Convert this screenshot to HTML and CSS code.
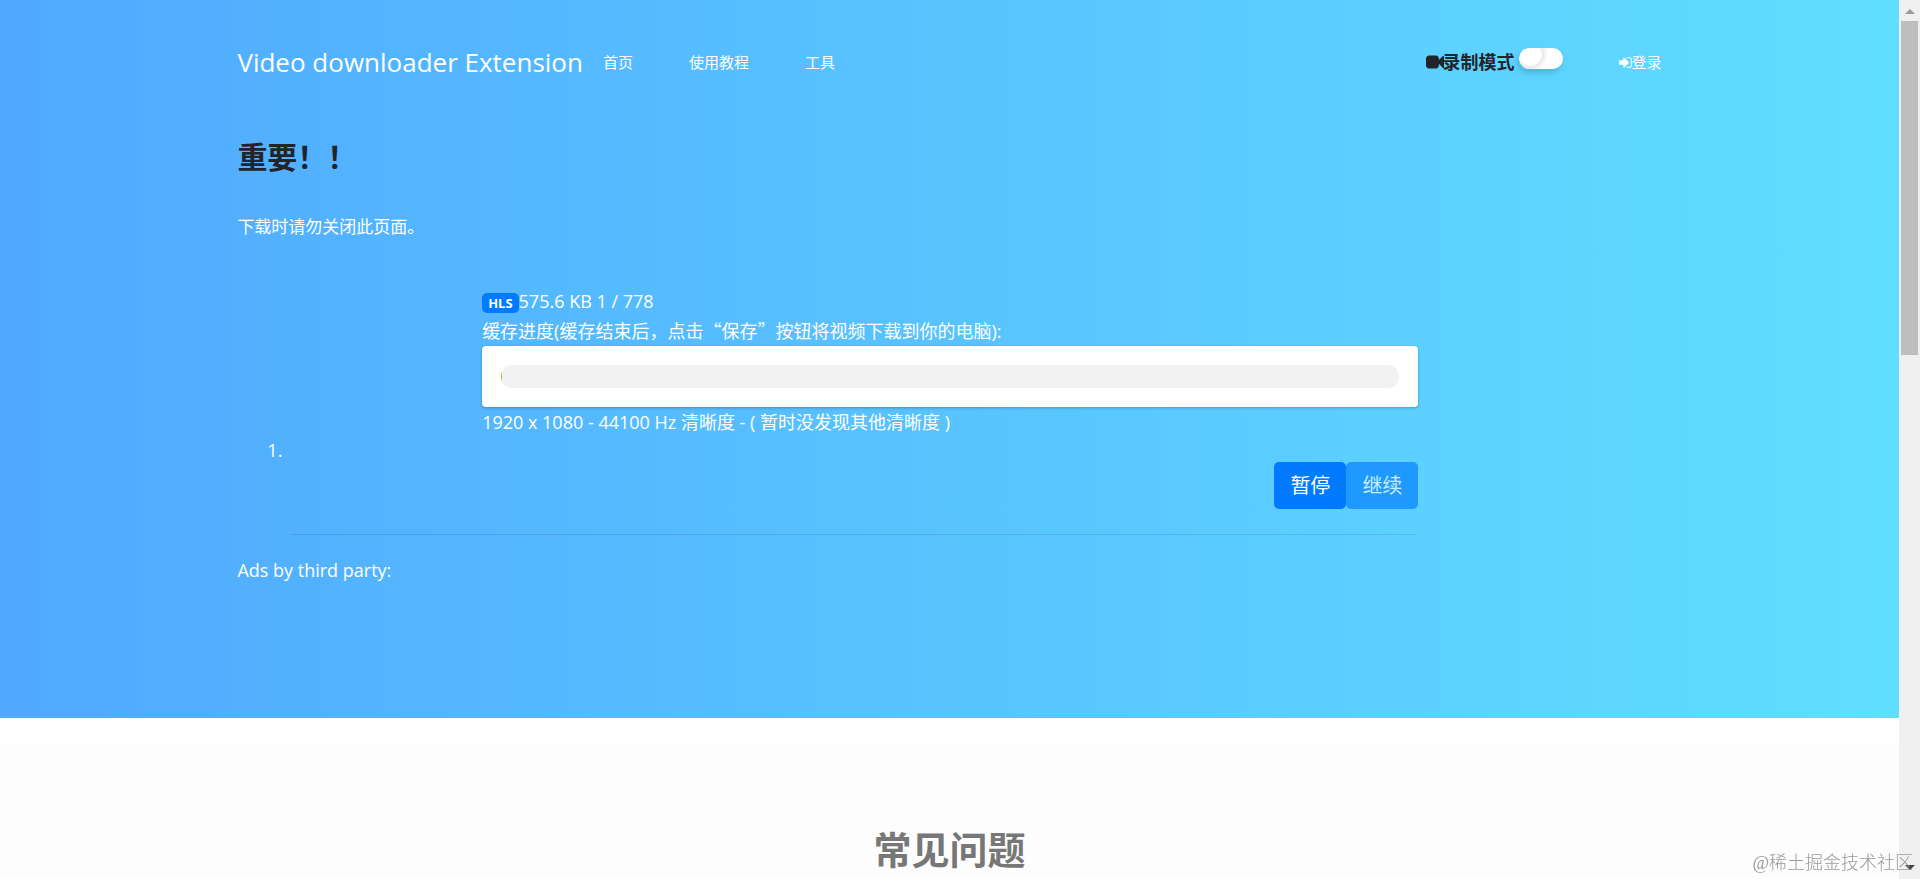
FILE: index.html
```html
<!DOCTYPE html>
<html lang="zh-CN">
<head>
  <meta charset="UTF-8">
  <meta name="viewport" content="width=device-width, initial-scale=1.0">
  <title>Video downloader Extension</title>
  <link rel="stylesheet" href="styles.css">
</head>
<body>
  <div class="page">
    <div class="hero">
      <div class="container">
        <header class="navbar">
          <a class="brand" href="#">Video downloader Extension</a>
          <nav class="nav-links">
            <a href="#">首页</a>
            <a href="#">使用教程</a>
            <a href="#">工具</a>
          </nav>
          <div class="record">
            <svg class="icon-camera" viewBox="0 0 1792 1792" aria-hidden="true"><path d="M1792 352v1088q0 42-39 59-13 5-25 5-27 0-45-19l-403-403v166q0 119-84.5 203.5t-203.5 84.5h-704q-119 0-203.5-84.5t-84.5-203.5v-704q0-119 84.5-203.5t203.5-84.5h704q119 0 203.5 84.5t84.5 203.5v165l403-402q18-19 45-19 12 0 25 5 39 17 39 59z"/></svg>
            <label for="record-mode">录制模式</label>
            <input type="checkbox" id="record-mode" class="switch">
          </div>
          <a class="login" href="#">
            <svg class="icon-login" viewBox="0 0 1792 1792" aria-hidden="true"><path d="M1312 896q0 26-19 45l-544 544q-19 19-45 19t-45-19-19-45v-288h-448q-26 0-45-19t-19-45v-384q0-26 19-45t45-19h448v-288q0-26 19-45t45-19 45 19l544 544q19 19 19 45zm352-352v704q0 119-84.5 203.5t-203.5 84.5h-320q-13 0-22.5-9.5t-9.5-22.5q0-4-1-20t-.5-26.5 3-23.5 10-19.5 20.5-6.5h320q66 0 113-47t47-113v-704q0-66-47-113t-113-47h-312l-11.5-1-11.5-3-8-5.5-7-9-2-13.5q0-4-1-20t-.5-26.5 3-23.5 10-19.5 20.5-6.5h320q119 0 203.5 84.5t84.5 203.5z"/></svg>登录</a>
        </header>

        <h1 class="notice-title">重要！！</h1>
        <p class="notice">下载时请勿关闭此页面。</p>

        <div class="downloads">
          <span class="number">1.</span>
          <div class="download">
            <div class="download-body">
              <div><span class="badge">HLS</span>575.6 KB 1 / 778</div>
              <div>缓存进度(缓存结束后，点击<span class="quoted">“保存”</span>按钮将视频下载到你的电脑):</div>
              <div class="progress-card">
                <div class="progress"><div class="progress-bar"></div></div>
              </div>
              <div>1920 x 1080 - 44100 Hz 清晰度 - ( 暂时没发现其他清晰度 )</div>
              <div class="actions">
                <button type="button">暂停</button>
                <button type="button" disabled>继续</button>
              </div>
            </div>
            <hr>
          </div>
        </div>

        <p class="ads">Ads by third party:</p>
      </div>
    </div>

    <section class="faq">
      <h2>常见问题</h2>
    </section>
  </div>

  <div class="scrollbar" aria-hidden="true">
    <span class="arrow-up"></span>
    <span class="thumb"></span>
    <span class="arrow-down"></span>
  </div>
  <div class="watermark">@稀土掘金技术社区</div>
</body>
</html>
```

FILE: styles.css
```css
* {
  box-sizing: border-box;
}

body {
  margin: 0;
  height: 100vh;
  display: flex;
  overflow: hidden;
  font-family: "Open Sans", "Noto Sans CJK SC", sans-serif;
  font-size: 18px;
  line-height: 30px;
  color: #fff;
}

a {
  color: #fff;
  text-decoration: none;
}

.page {
  flex: 1;
  display: flex;
  flex-direction: column;
}

.hero {
  flex: none;
  padding: 38px 0 133px;
  background: linear-gradient(90deg, #50a9ff, #60deff);
}

.container {
  width: 75%;
  margin: 0 auto;
}

/* top navigation */
.navbar {
  display: flex;
  align-items: center;
  height: 48px;
  font-size: 15px;
}

.brand {
  font-size: 26px;
  margin-right: 20px;
}

.nav-links {
  display: flex;
  gap: 56px;
}

.record {
  display: flex;
  align-items: center;
  margin-left: auto;
  color: #212529;
  font-size: 18px;
  font-weight: bold;
}

.icon-camera {
  width: 18px;
  height: 18px;
  margin-right: -1px;
  fill: #212529;
}

.switch {
  appearance: none;
  width: 44px;
  height: 21px;
  margin: 0 0 8px 4px;
  border-radius: 11px;
  background: radial-gradient(circle at 11px 6px, #fff 11px, #e9e9e9 13px, #fff 18px);
  box-shadow: -2px 4px 6px rgba(0, 0, 0, 0.15);
}

.login {
  display: flex;
  align-items: center;
  margin-left: 55px;
}

.icon-login {
  width: 15px;
  height: 15px;
  margin-right: -1px;
  fill: #fff;
}

.notice-title {
  margin: 50px 0 0;
  font-size: 30px;
  line-height: 42px;
  color: #212529;
}

.notice {
  margin: 34px 0 44px;
  font-size: 17px;
}

/* download list */
.downloads {
  display: flex;
  align-items: center;
  width: 1181px;
  max-width: 100%;
}

.number {
  width: 53px;
  padding: 78px 8px 0 0;
  text-align: right;
}

.download {
  flex: 1;
}

.download-body {
  margin-left: 17%;
}

.badge {
  display: inline-block;
  padding: 0 6px;
  border-radius: 5px;
  background: #007bff;
  font-size: 13px;
  line-height: 20px;
  font-weight: bold;
}

.quoted {
  font-family: "Noto Sans CJK SC", sans-serif;
  line-height: 20px;
}

.progress-card {
  padding: 19px;
  border-radius: 4px;
  background: #fff;
  box-shadow: 0 1px 3px rgba(0, 0, 0, 0.25);
}

.progress {
  height: 23px;
  border-radius: 12px;
  background: #f2f2f2;
  overflow: hidden;
}

.progress-bar {
  width: 1px;
  height: 100%;
  background: #a5c639;
}

.actions {
  display: flex;
  justify-content: flex-end;
  margin-top: 25px;
}

.actions button {
  padding: 8px 16px;
  border: 0;
  border-radius: 5px;
  background: #007bff;
  color: #fff;
  font: inherit;
  font-size: 20px;
  line-height: 31px;
}

.actions button:disabled {
  opacity: 0.65;
}

hr {
  margin: 25px 3px 0 0;
  border: 0;
  border-top: 1px solid rgba(0, 0, 0, 0.1);
}

.ads {
  margin: 20px 0 0;
}

.faq {
  flex: 1;
  padding-top: 80px;
  border-top: 26px solid #fff;
  background: #fdfdfd;
  text-align: center;
}

.faq h2 {
  margin: 0;
  font-size: 38px;
  line-height: 50px;
  color: #777;
}

.scrollbar {
  width: 21px;
  display: flex;
  flex-direction: column;
  align-items: center;
  padding: 9px 0;
  background: #f0f0f0;
}

.thumb {
  width: 17px;
  height: 334px;
  margin: 7px 0 auto;
  background: #bebebe;
}

.arrow-up,
.arrow-down {
  border: 5px solid transparent;
  border-top: 0;
  border-bottom-color: #999;
}

.arrow-down {
  border-top: 5px solid #444;
  border-bottom: 0;
}

.watermark {
  position: fixed;
  right: 7px;
  bottom: 1px;
  font-family: "Liberation Serif", "Noto Sans CJK SC", serif;
  font-size: 18px;
  font-weight: 300;
  color: #999;
}
```
